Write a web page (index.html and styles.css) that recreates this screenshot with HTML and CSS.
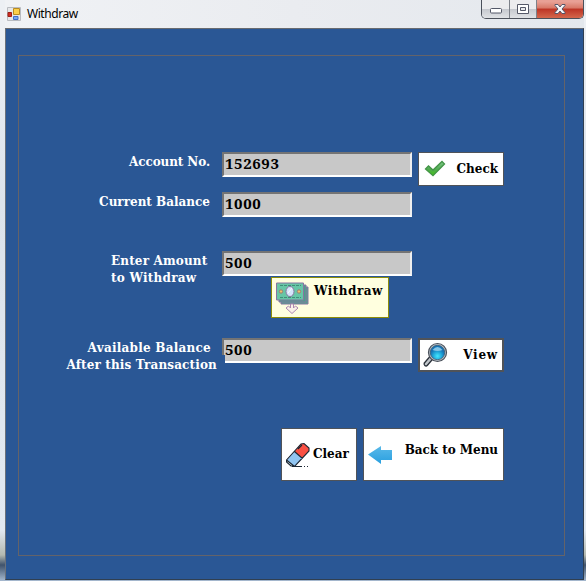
FILE: index.html
```html
<!DOCTYPE html>
<html lang="en">
<head>
<meta charset="utf-8">
<title>Withdraw</title>
<link rel="stylesheet" href="styles.css">
</head>
<body>
<main class="window">
  <header class="titlebar">
    <svg class="app-icon" width="14" height="14" viewBox="0 0 14 14">
      <path d="M.5.5h13v13H.5z" fill="#e6e7e9" stroke="#b8bbc0"/>
      <path d="M1 5.500h3.500v4H1z" fill="#d32b20" stroke="#9b2018"/>
      <path d="M6.500 1.500h6v6h-6z" fill="#fbcf4b" stroke="#b88b22"/>
      <path d="M6.500 9.500h4.500v3H6.500z" fill="#76a6f5" stroke="#416fc8"/>
    </svg>
    <h1 class="title">Withdraw</h1>
    <div class="controls">
      <span class="control minimize"><svg width="12" height="6"><rect x=".5" y=".5" width="11" height="4.500" rx="1" fill="#fff" stroke="#555968"/></svg></span>
      <span class="control maximize"><svg width="12" height="10"><path d="M.5.5h11v9H.5z" fill="#fff" stroke="#555968"/><path d="M3.500 3.500h5v3h-5z" fill="#e7e8eb" stroke="#555968"/></svg></span>
      <span class="control close"><svg width="12" height="10"><path d="M1 .5h3L6 3 8 .5h3v1L8 5l3 3.500v1H8L6 7 4 9.500H1v-1L4 5 1 1.500z" fill="#f6f6f8" stroke="#54566a"/></svg></span>
    </div>
  </header>
  <section class="client">
    <form class="panel">
      <div class="row account">
        <label class="label">Account No.</label>
        <div class="field">152693</div>
        <div class="button check">
          <svg width="22" height="18" viewBox="0 0 22 18"><defs><linearGradient id="green" x2="0" y2="1"><stop stop-color="#80c98b"/><stop offset=".55" stop-color="#50aa50"/><stop offset="1" stop-color="#42c514"/></linearGradient></defs><path d="M1.500 9 4.500 6l4.500 4L18 1.500 20.500 4 9 15.700z" fill="url(#green)" stroke="#439447" stroke-width="1.300"/></svg>
          <span>Check</span>
        </div>
      </div>
      <div class="row current">
        <label class="label">Current Balance</label>
        <div class="field">1000</div>
      </div>
      <div class="row amount">
        <label class="label"><span class="line enter">Enter Amount</span><span class="line to">to Withdraw</span></label>
        <div class="field">500</div>
      </div>
      <div class="button withdraw">
        <svg width="34" height="34" viewBox="0 0 34 34">
          <path d="M5 5h27v17H5z" fill="#4fa48c" stroke="#8975a1"/><path d="M3 3h27v17H3z" fill="#4ba18a" stroke="#8975a1"/>
          <path d="M.5 1h27v17H.5z" fill="#67c6a6" stroke="#8975a1"/><path d="M4 3.500h21M4 15.500h21" stroke="#408e79" stroke-dasharray="3 1"/>
          <ellipse cx="14" cy="9.500" rx="4" ry="5" fill="#d6e6fb" stroke="#8975a1"/><path d="m12 11 4-5" stroke="#fff"/>
          <circle cx="5" cy="9.500" r="1.700" fill="#efc36c" stroke="#9a7d74"/><circle cx="23" cy="9.500" r="1.700" fill="#efc36c" stroke="#9a7d74"/>
          <path d="M14.500 22h3v4l2-2 2.500 2-6 5.500-6-5.500 2.500-2 2 2z" fill="#fbf1e8" stroke="#ad87b1"/>
        </svg>
        <span>Withdraw</span>
      </div>
      <div class="row available">
        <label class="label"><span class="line avail">Available Balance</span><span class="line after">After this Transaction</span></label>
        <div class="field cut">500</div>
        <div class="button view">
          <svg width="26" height="26" viewBox="0 0 26 26"><defs><radialGradient id="lens" cy=".75"><stop stop-color="#42e7ff"/><stop offset=".6" stop-color="#20a6d9"/><stop offset="1" stop-color="#1673b4"/></radialGradient></defs><path d="m10 15-6 7" stroke="#292f38" stroke-width="5" stroke-linecap="round"/><path d="m10 15-6 7" stroke="#c0c5ca" stroke-width="2.500" stroke-linecap="round"/><circle cx="15.500" cy="10.500" r="9" fill="#b8bec5" stroke="#4a515b" stroke-width="1.200"/><circle cx="15.500" cy="10.500" r="7.200" fill="url(#lens)" stroke="#31536c" stroke-width=".7"/><path d="M10.500 8q5-6 10 0-5 2-10 0" fill="#83c5e7"/></svg>
          <span>View</span>
        </div>
      </div>
      <div class="actions">
        <div class="button clear">
          <svg width="25" height="26" viewBox="0 0 25 26"><path d="M.5 18 15 2l3-.5 5 4.500v3L9 24H5L.5 20z" fill="#fa5043"/><path d="m.5 18 8-8.500 8 7L9 24H5L.5 20z" fill="#91c5f1"/><path d="m.5 18 6.500 5.500L5 24 .5 20z" fill="#e1f1f4"/><path d="M.5 18 15 2l3-.5 5 4.500v3L9 24H5L.5 20zm8-8.500 8 7M.5 18 8 24M12 7l4-4M6 24.500h10m2 0h1m2 0h1" fill="none" stroke="#1c2733" stroke-width="1.100"/></svg>
          <span>Clear</span>
        </div>
        <div class="button back">
          <svg width="24" height="20" viewBox="0 0 24 20"><defs><linearGradient id="blue" x2="0" y2="1"><stop stop-color="#59b9e9"/><stop offset="1" stop-color="#299fdf"/></linearGradient></defs><path d="M0 9.500 13 1v4h11v10H13v4z" fill="url(#blue)"/></svg>
          <span>Back to Menu</span>
        </div>
      </div>
    </form>
  </section>
</main>
</body>
</html>
```
FILE: styles.css
```css
* { box-sizing: border-box; }
body { margin: 0; overflow: hidden; }
svg { display: block; flex: none; }
.window {
  width: 586px; height: 581px; padding: 0 2px 1px 5px;
  background: linear-gradient(#edf0f4 0 28px, #dce3eb 200px, #e2e9f1 530px, #b4b9b0 555px, #40536c 565px, #a7bad0);
}
.titlebar { display: flex; height: 28px; padding-left: 2px; background: linear-gradient(90deg, #f0f2f5, #eaecf0 50%, #e4e8ed); }
.app-icon { margin-top: 7px; }
.title { margin: 6px 0 0 6px; font: 12px/16px "Noto Sans", sans-serif; letter-spacing: -.45px; color: #000; }
.controls { display: flex; width: 103px; height: 19px; margin-left: auto; border: 1px solid #4c515b; border-top: 0; border-radius: 0 0 5px 5px; overflow: hidden; }
.control { display: flex; align-items: center; justify-content: center; padding-bottom: 1px; width: 27px; background: linear-gradient(#ececee 0 48%, #c5c8ce 50%, #e0e2e5); border-right: 1px solid #7d8189; }
.control:first-child { width: 28px; }
.minimize { padding-top: 5px; }
.close { flex: 1; border: 0; background: linear-gradient(#e8a095 0 10%, #d77766 45%, #bd3425 50%, #d4674c); }
.client { width: 579px; height: 552px; padding: 26px 17px 22px 12px; background: #2a5795; border: 1px solid #303f51; border-top-color: #686b70; border-left-color: #6b717a; }
.panel { width: 547px; height: 501px; padding-top: 96px; border: 1px solid #646369; }
.row { display: grid; grid-template-columns: 203px 190px 86px; align-items: start; font: bold 12px/17px "DejaVu Serif", serif; }
.account { height: 40px; }
.current { height: 59px; }
.amount { height: 26px; }
.available { height: 90px; margin-top: 20px; }
.label { padding-right: 12px; text-align: right; color: #fff; white-space: nowrap; }
.account .label { padding-top: 2px; letter-spacing: -.1px; }
.current .label { padding-top: 2px; }
.amount .label { padding: 2px 0 0 92px; text-align: left; letter-spacing: .15px; }
.available .label { padding: 2px 5px 0 0; letter-spacing: .15px; }
.line { display: block; }
.to { letter-spacing: .25px; }
.avail { padding-right: 6px; letter-spacing: .25px; }
.field { height: 25px; padding: 1px; color: #000; background: #c8c8c8; border: 2px solid; border-color: #747474 #efefef #fff #747474; font: bold 15px/17px "Noto Serif", "Liberation Serif", serif; letter-spacing: .6px; }
.cut { clip-path: polygon(0 0, 100% 0, 100% 100%, 3px 100%, 3px 17px, 0 17px); }
.button { display: flex; align-items: center; background: #fff; border: 1px solid #505358; color: #000; font: bold 12px/17px "DejaVu Serif", serif; white-space: nowrap; }
.check, .view { width: 86px; height: 34px; margin-left: 6px; padding: 0 5px; justify-content: space-between; }
.view { border-width: 2px; padding: 0 4px 0 2px; letter-spacing: .8px; }
.withdraw { width: 118px; height: 41px; margin-left: 252px; padding: 4px 4px 0; background: #ffffdf; border-color: #8e8d08; align-items: flex-start; gap: 4px; letter-spacing: .5px; }
.withdraw span { padding-top: 1px; }
.actions { display: flex; gap: 6px; margin-left: 262px; }
.clear { width: 76px; height: 53px; padding-left: 4px; gap: 2px; }
.back { width: 141px; height: 53px; padding: 0 5px 0 4px; justify-content: space-between; letter-spacing: -.05px; }
.back span { margin-bottom: 9px; }
```
